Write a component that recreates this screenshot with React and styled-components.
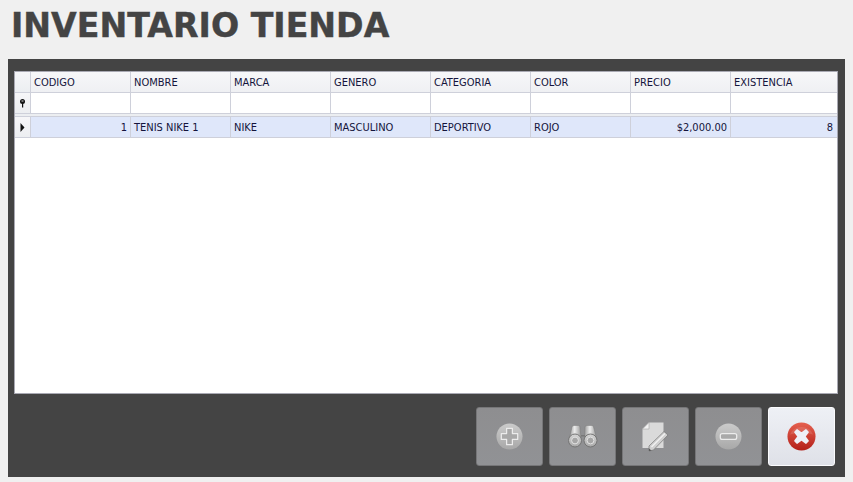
import React from "react";
import styled, { createGlobalStyle } from "styled-components";

const Global = createGlobalStyle`
  html, body { margin: 0; padding: 0; background: #f0f0f0; }
  body { width: 853px; height: 482px; overflow: hidden; }
`;
const Page = styled.div`
  width: 853px; height: 482px; display: flex; flex-direction: column;
  padding: 0 8px 5px; box-sizing: border-box; background: #f0f0f0;
`;
const Title = styled.h1`
  margin: 0; height: 59px; padding: 6px 0 0 3px; box-sizing: border-box;
  font: bold 33.2px/40px "DejaVu Sans", sans-serif; font-stretch: normal; color: #444444; white-space: nowrap;
  -webkit-text-stroke: 0.4px #444444;
`;
const Panel = styled.section`
  flex: 1; background: #444444; display: flex; flex-direction: column;
  padding: 12px 7px 11px 6px; box-sizing: border-box;
`;
const Grid = styled.div`
  height: 323px; background: #fff; border: 1px solid #a9a9b3; box-sizing: border-box;
  display: flex; flex-direction: column; overflow: hidden;
`;
const Row = styled.div`
  display: grid; grid-template-columns: 16px repeat(7, 100px) 1fr; height: ${p => p.$h}px;
  box-sizing: border-box; flex: none;
  border-bottom: 1px solid #ced0da;
  background: ${p => p.$bg};
`;
const Cell = styled.div`
  font: 11px/22px "DejaVu Sans", sans-serif; font-stretch: condensed; color: #14143c;
  padding: 0 3px 0 3px; box-sizing: border-box; white-space: nowrap; overflow: hidden;
  border-right: 1px solid #ced0da;
  text-align: ${p => (p.$right ? "right" : "left")};
  &:last-child { border-right: 0; padding-right: 4px; }
`;
const Indicator = styled.div`
  background: linear-gradient(#f6f6f8, #eceef1);
  border-right: 1px solid #ced0da;
  display: flex; align-items: center; justify-content: center;
`;
const Divider = styled.div`
  height: 3px; flex: none; background: #eceef1; border-bottom: 1px solid #ced0da; box-sizing: border-box;
`;
const Toolbar = styled.div`
  display: flex; justify-content: flex-end; gap: 6px; padding: 13px 3px 0 0;
`;
const ToolButton = styled.button`
  width: 67px; height: 59px; padding: 0; border-radius: 3px; box-sizing: border-box;
  display: flex; align-items: center; justify-content: center;
  border: 1px solid ${p => (p.$active ? "#fbfbfd" : "#767678")};
  background: ${p => (p.$active ? "linear-gradient(#eef0f5, #dfe1e8)" : "linear-gradient(#8e8e90, #919295)")};
  & > svg { filter: blur(0.35px); }
`;

const headers = ["CODIGO", "NOMBRE", "MARCA", "GENERO", "CATEGORIA", "COLOR", "PRECIO", "EXISTENCIA"];
const data = [
  ["1", true], ["TENIS NIKE 1"], ["NIKE"], ["MASCULINO"], ["DEPORTIVO"], ["ROJO"], ["$2,000.00", true], ["8", true],
];

const Defs = () => (
  <svg width="0" height="0" style={{ position: "absolute" }}>
    <defs>
      <linearGradient id="gr" x1="0" y1="0" x2="0" y2="1">
        <stop offset="0" stopColor="#cbcbcb" /><stop offset="1" stopColor="#a8a8a8" />
      </linearGradient>
      <linearGradient id="red" x1="0" y1="0" x2="0" y2="1">
        <stop offset="0" stopColor="#e5604f" /><stop offset="1" stopColor="#b3201a" />
      </linearGradient>
      <linearGradient id="lens" x1="0" y1="0" x2="0" y2="1">
        <stop offset="0" stopColor="#d6d6d6" /><stop offset="1" stopColor="#a8a8a8" />
      </linearGradient>
      <linearGradient id="barrel" x1="0" y1="0" x2="1" y2="0">
        <stop offset="0" stopColor="#9c9c9c" /><stop offset=".45" stopColor="#ececec" /><stop offset="1" stopColor="#999999" />
      </linearGradient>
    </defs>
  </svg>
);

const Plus = () => (
  <svg width="27" height="27" viewBox="0 0 28 28">
    <circle cx="14" cy="14" r="13.5" fill="url(#gr)" />
    <path d="M11 5.500h6v5.500h5.500v6h-5.500v5.500h-6v-5.500h-5.500v-6h5.500z" fill="#a9a9a9" stroke="#ececec" strokeWidth="1.300" strokeLinejoin="round" />
  </svg>
);
const Minus = () => (
  <svg width="27" height="27" viewBox="0 0 28 28">
    <circle cx="14" cy="14" r="13.5" fill="url(#gr)" />
    <rect x="5.500" y="11" width="17" height="6" rx="2" fill="#a9a9a9" stroke="#ececec" strokeWidth="1.300" />
  </svg>
);
const Binoculars = () => (
  <svg width="30" height="23" viewBox="0 0 30 23">
    <path d="M4 2 Q4 0.500 6 0.500 H10.500 Q12 0.500 12 2 L13 13 H1.500z" fill="url(#barrel)" stroke="#7c7c7c" strokeWidth=".5" />
    <path d="M17 2 Q17 0.500 19 0.500 H24 Q25.500 0.500 25.500 2 L28.500 13 H16.500z" fill="url(#barrel)" stroke="#7c7c7c" strokeWidth=".5" />
    <rect x="13" y="10" width="4" height="1.500" fill="#787878" />
    <circle cx="7" cy="15.500" r="6.500" fill="url(#lens)" stroke="#747474" />
    <circle cx="7" cy="15.500" r="3.400" fill="#a6a6a6" stroke="#e2e2e2" />
    <circle cx="22.500" cy="15.500" r="6.500" fill="url(#lens)" stroke="#747474" />
    <circle cx="22.500" cy="15.500" r="3.400" fill="#a6a6a6" stroke="#e2e2e2" />
  </svg>
);
const EditDoc = () => (
  <svg width="27" height="30" viewBox="0 0 27 30">
    <path d="M7 0.500 H21.500 V26 H0.500 V7z" fill="#dadada" />
    <path d="M7 0.500 V7 H0.500z" fill="#f2f2f2" stroke="#a5a5a5" strokeWidth=".6" />
    <path d="M7 29 L7 24 L22 9.500 L26 13 L11.500 28z" fill="#d0d0d0" stroke="#747474" strokeWidth=".7" />
    <path d="M9.500 25 L23 11.500" stroke="#f2f2f2" strokeWidth="1.200" />
    <path d="M7 29 L7 26.500 L9.500 28.500z" fill="#555" />
  </svg>
);
const Close = () => (
  <svg width="29" height="29" viewBox="0 0 30 30">
    <circle cx="15" cy="15" r="14.500" fill="url(#red)" />
    <path d="M3 13 A12.500 11 0 0 1 27 13 Q15 9 3 13z" fill="#fff" opacity=".12" />
    <path d="M10.500 8.500 L15 12 L19.500 8.500 L21.500 10.500 L18 15 L21.500 19.500 L19.500 21.500 L15 18 L10.500 21.500 L8.500 19.500 L12 15 L8.500 10.500z" fill="#eef0f8" stroke="#eef0f8" strokeWidth="2.200" strokeLinejoin="round" />
  </svg>
);
const FilterIcon = () => (
  <svg width="7" height="9" viewBox="0 0 7 9">
    <circle cx="3.500" cy="2.500" r="2.500" fill="#111" />
    <rect x="2.500" y="1.500" width="2" height="1" fill="#ddd" />
    <rect x="3" y="4" width="1.200" height="4.500" fill="#111" />
  </svg>
);
const Arrow = () => (
  <svg width="5" height="9" viewBox="0 0 5 9"><path d="M0.500 0 L4.500 4.500 L0.500 9z" fill="#111" /></svg>
);

export default function App() {
  return (
    <Page>
      <Global />
      <Defs />
      <Title>INVENTARIO TIENDA</Title>
      <Panel>
        <Grid>
          <Row $h={21} $bg="linear-gradient(#f7f7f9, #eff0f3)">
            <Indicator />
            {headers.map(h => <Cell key={h}>{h}</Cell>)}
          </Row>
          <Row $h={21} $bg="#fff">
            <Indicator><FilterIcon /></Indicator>
            {headers.map(h => <Cell key={h} />)}
          </Row>
          <Divider />
          <Row $h={21} $bg="#dfe7fa">
            <Indicator><Arrow /></Indicator>
            {data.map(([t, r]) => <Cell key={t} $right={r}>{t}</Cell>)}
          </Row>
        </Grid>
        <Toolbar>
          <ToolButton aria-label="Agregar"><Plus /></ToolButton>
          <ToolButton aria-label="Buscar"><Binoculars /></ToolButton>
          <ToolButton aria-label="Editar"><EditDoc /></ToolButton>
          <ToolButton aria-label="Quitar"><Minus /></ToolButton>
          <ToolButton $active aria-label="Cerrar"><Close /></ToolButton>
        </Toolbar>
      </Panel>
    </Page>
  );
}
